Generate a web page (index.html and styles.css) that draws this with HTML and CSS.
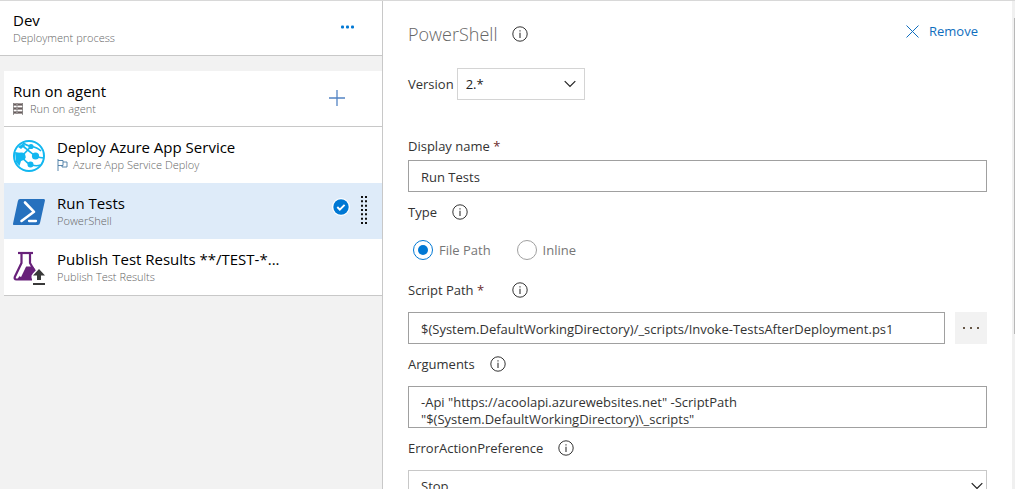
FILE: index.html
```html
<!DOCTYPE html>
<html lang="en">
<head>
<meta charset="utf-8">
<meta name="viewport" content="width=device-width, initial-scale=1">
<title>Dev - Deployment process</title>
<link rel="stylesheet" href="styles.css">
</head>
<body>
<svg class="symbols" aria-hidden="true">
  <symbol id="info" viewBox="0 0 16 16">
    <circle cx="8" cy="8" r="7.2" fill="none" stroke="currentColor"/>
    <path d="M8 6.8V12M8 4.2v1.4" fill="none" stroke="currentColor" stroke-width="1.1"/>
  </symbol>
  <symbol id="chevron" viewBox="0 0 12 8">
    <path d="M.7 1.2 6 6.5l5.300-5.300" fill="none" stroke="currentColor" stroke-width="1.200"/>
  </symbol>
</svg>
<div class="app">
  <aside class="process">
    <header class="row stage">
      <div class="text">
        <h1 class="title">Dev</h1>
        <p class="sub">Deployment process</p>
      </div>
      <button class="icon-button more" type="button" aria-label="More actions">
        <svg width="14" height="4" viewBox="0 0 14 4" fill="currentColor"><rect x="0" y=".5" width="3" height="3" rx="1"/><rect x="5" y=".5" width="3" height="3" rx="1"/><rect x="10" y=".5" width="3" height="3" rx="1"/></svg>
      </button>
    </header>
    <section class="tasks">
      <div class="row agent">
        <div class="text">
          <h2 class="title">Run on agent</h2>
          <p class="sub spaced">
            <svg width="10" height="12" viewBox="0 0 10 12"><path d="M0 0h10v3H0zM0 4h10v3H0zM0 8h10v3H0z" fill="#a59c9c"/><path d="M1 1.500h2M5 1.500h4M1 5.500h2M5 5.500h4M1 9.500h2M5 9.500h4" stroke="#655c5c"/><path d="M.5 0v12M9.500 0v12M4 0v11" stroke="#777" stroke-width=".7"/></svg>
            Run on agent
          </p>
        </div>
        <button class="icon-button add" type="button" aria-label="Add a task">
          <svg width="16" height="16" viewBox="0 0 16 16"><path d="M0 8h16M8 0v16" stroke="currentColor" stroke-width="1.300"/></svg>
        </button>
      </div>
      <ul class="list">
        <li class="row task">
          <svg class="logo" width="32" height="32" viewBox="0 0 32 32" fill="none" stroke="#12b7f0">
            <circle cx="16" cy="16" r="15" stroke-width="2"/>
            <path d="M10 3C13 5 15 6 18 6.500M18 6.500 8.500 16.500M18 6.500C22 7 26 9 28 11M10 6C17 12 19 14 22.500 16M8.500 16.500C12 21 14 23.500 18.500 25M22.500 16C26 17.500 28 18 31 18M18.500 25C22 26 25 26 27.500 25" stroke-width="1.700"/>
            <path d="M2 12 5 12.500 11.500 13.500 12.500 18 8 21 6.500 26 3 22ZM5 7 10 3.500 12 5.500 8 9Z" fill="#12b7f0" stroke="none"/>
            <g fill="#12b7f0" stroke="none"><circle cx="8.500" cy="16.500" r="4"/><circle cx="18" cy="6.500" r="2.600"/><circle cx="22.500" cy="16" r="3.600"/><circle cx="17.500" cy="24.500" r="3"/></g>
          </svg>
          <div class="text">
            <h3 class="title">Deploy Azure App Service</h3>
            <p class="sub tight">
              <svg width="11" height="12" viewBox="0 0 11 12" fill="none" stroke="#487aa4" stroke-width=".9"><path d="M1 0v12M1 1.500h5v5H1M6 3h4v5H5V6.500"/></svg>
              Azure App Service Deploy
            </p>
          </div>
        </li>
        <li class="row task selected">
          <svg class="logo" width="32" height="32" viewBox="0 0 32 32">
            <path d="M7 3h23.500q1.800 0 1.400 1.700L27 27q-.4 2-2.200 2H1.300q-1.700 0-1.200-1.800L4.900 5Q5.300 3 7 3Z" fill="#2671be"/>
            <path d="m12 6.500 9 9.300L8.500 25" fill="none" stroke="#fff" stroke-width="2.600" stroke-linecap="round" stroke-linejoin="round"/><path d="M16 25h7" stroke="#fff" stroke-width="2.300" stroke-linecap="round"/>
          </svg>
          <div class="text">
            <h3 class="title">Run Tests</h3>
            <p class="sub">PowerShell</p>
          </div>
          <svg class="check" width="18" height="18" viewBox="0 0 18 18"><circle cx="9" cy="9" r="9" fill="#fff"/><circle cx="9" cy="9" r="7.700" fill="#0078d4"/><path d="m5.300 9 2.500 2.600 4.800-4.800" fill="none" stroke="#fff" stroke-width="1.900"/></svg>
          <svg class="grip" width="8" height="28" viewBox="0 0 8 28"><path d="M2 0v28M6 0v28" stroke="#111" stroke-width="2" stroke-dasharray="2 2.330"/></svg>
        </li>
        <li class="row task">
          <svg class="logo" width="32" height="34" viewBox="0 0 32 34">
            <path d="M5 2h15" stroke="#68217a" stroke-width="2.200"/><path d="M8.500 2v10L2 25.500Q.8 28.500 3.500 28.500H19M17 2v10l4 7" fill="none" stroke="#68217a" stroke-width="2.200"/>
            <path d="M12 15.500h8l3 4-4.500 5V29H4Z" fill="#68217a"/><path d="M7 25.500 12.500 14" stroke="#fff" stroke-width="2.400"/>
            <path d="m26 16 7 7.500h-4.800V30h-4.400v-6.500H19Z" fill="#fff"/><path d="m26 18 6 6.500h-4V29h-4v-4.500h-4Z" fill="#393939"/><path d="M20 33h12" stroke="#393939" stroke-width="2"/>
          </svg>
          <div class="text">
            <h3 class="title">Publish Test Results **/TEST-*...</h3>
            <p class="sub">Publish Test Results</p>
          </div>
        </li>
      </ul>
    </section>
  </aside>

  <main class="detail">
    <header class="heading">
      <h2 class="name">PowerShell</h2>
      <button class="info" type="button" aria-label="About this task"><svg><use href="#info"/></svg></button>
      <button class="remove" type="button">
        <svg width="13" height="13" viewBox="0 0 13 13"><path d="m.5.5 12 12M12.500.5l-12 12" stroke="currentColor" stroke-width="1"/></svg>
        Remove
      </button>
    </header>
    <div class="version">
      <label for="version">Version</label>
      <div class="drop">
        <select id="version"><option>2.*</option><option>1.*</option></select>
        <svg class="chevron"><use href="#chevron"/></svg>
      </div>
    </div>

    <form class="form">
      <div class="field compact">
        <div class="caption"><label for="display-name">Display name <span class="required">*</span></label></div>
        <input class="box" id="display-name" type="text" value="Run Tests">
      </div>
      <div class="field type" role="radiogroup" aria-labelledby="type-label">
        <div class="caption"><span id="type-label">Type</span><button class="info" type="button" aria-label="About type"><svg><use href="#info"/></svg></button></div>
        <div class="radios">
          <label class="choice"><input type="radio" name="type" checked>File Path</label>
          <label class="choice"><input type="radio" name="type">Inline</label>
        </div>
      </div>
      <div class="field">
        <div class="caption wide"><label for="script-path">Script Path <span class="required">*</span></label><button class="info" type="button" aria-label="About script path"><svg><use href="#info"/></svg></button></div>
        <div class="browse">
          <input class="box" id="script-path" type="text" value="$(System.DefaultWorkingDirectory)/_scripts/Invoke-TestsAfterDeployment.ps1">
          <button class="browse-button" type="button" aria-label="Browse"><svg width="16" height="2" viewBox="0 0 16 2" fill="#665747"><path d="M0 0h2v2H0zM7 0h2v2H7zM14 0h2v2h-2z"/></svg></button>
        </div>
      </div>
      <div class="field">
        <div class="caption"><label for="arguments">Arguments</label><button class="info" type="button" aria-label="About arguments"><svg><use href="#info"/></svg></button></div>
        <textarea class="box" id="arguments" rows="2">-Api "https://acoolapi.azurewebsites.net" -ScriptPath "$(System.DefaultWorkingDirectory)\_scripts"</textarea>
      </div>
      <div class="field">
        <div class="caption"><label for="preference">ErrorActionPreference</label><button class="info" type="button" aria-label="About error action preference"><svg><use href="#info"/></svg></button></div>
        <div class="drop full">
          <select id="preference"><option>Stop</option><option>Continue</option></select>
          <svg class="chevron"><use href="#chevron"/></svg>
        </div>
      </div>
    </form>
  </main>
  <div class="track"><div class="thumb"></div></div>
</div>
</body>
</html>
```
FILE: styles.css
```css
* { box-sizing: border-box; }

body {
  margin: 0;
  background: #fff;
  color: #333;
  font: 13px/20px "Open Sans", "Noto Sans", sans-serif;
}

h1, h2, h3, p, ul { margin: 0; padding: 0; font-weight: 400; }
button, input, select, textarea { font: inherit; color: inherit; margin: 0; }
button { padding: 0; border: 0; background: none; cursor: pointer; }
svg { display: block; flex: none; }
.symbols { position: absolute; width: 0; height: 0; }

.app {
  display: flex;
  height: 100vh;
  overflow: hidden;
  border-top: 1px solid #d8d8d8;
}

.process {
  flex: 0 0 383px;
  background: #f2f2f2;
  border-right: 1px solid #c8c8c8;
}
.row { display: flex; align-items: center; background: #fff; }
.text { flex: 1; min-width: 0; }
.title {
  color: #000;
  font-size: 15px;
  line-height: 20px;
  white-space: nowrap;
}
.sub {
  display: flex;
  align-items: center;
  color: #666;
  font-size: 11px;
  font-weight: 300;
  line-height: 16px;
}
.spaced { gap: 7px; }
.tight { gap: 5px; }

.stage {
  height: 55px;
  padding: 0 27px 0 13px;
  border-bottom: 1px solid #c8c8c8;
}
.icon-button { display: grid; place-items: center; padding-bottom: 2px; }
.more { color: #0078d4; }
.add { color: #5384c4; }

.tasks { margin: 15px 0 0 4px; border-bottom: 1px solid #c8c8c8; }
.agent {
  height: 56px;
  padding: 0 37px 0 9px;
  border-bottom: 1px solid #c8c8c8;
}
.list { list-style: none; }
.task { height: 56px; padding: 0 14px 0 9px; }
.selected { background: #deebf9; }
.logo { margin: 2px 12px 0 0; }
.check { margin: 0 10px 8px 0; }
.grip { margin-bottom: 2px; }

.detail { flex: 1; min-width: 0; padding: 20px 25px 0; }
.heading { display: flex; align-items: center; height: 26px; }
.name { color: #666; font-size: 18px; line-height: 26px; font-weight: 300; }
.info { display: block; margin-left: 15px; }
.info svg { width: 16px; height: 16px; }
.remove {
  display: flex;
  align-items: center;
  gap: 10px;
  margin: 0 9px 6px auto;
  color: #106ebe;
}

.version { display: flex; align-items: center; gap: 3px; margin-top: 21px; }
.drop { position: relative; width: 128px; color: #222; }
.drop.full { width: auto; }
.drop select {
  display: block;
  width: 100%;
  height: 32px;
  padding: 0 30px 0 8px;
  border: 1px solid #d4d4d4;
  border-radius: 0;
  background: #fff;
  appearance: none;
}
.drop.full select { padding-left: 12px; border-color: #c8c8c8; color: #333; }
.chevron {
  position: absolute;
  top: 12px;
  right: 9px;
  width: 12px;
  height: 8px;
  pointer-events: none;
}
.full .chevron { right: 4px; }

.form { padding-top: 36px; }
.field { margin-bottom: 10px; }
.caption { display: flex; align-items: center; height: 20px; margin-bottom: 12px; }
.compact .caption { margin-bottom: 4px; }
.caption.wide .info { margin-left: 28px; }
.required { color: #6b2b2b; }
.box {
  display: block;
  width: 100%;
  height: 32px;
  padding: 2px 12px 0;
  border: 1px solid #a0a0a0;
  border-radius: 0;
  background: #fff;
}
textarea.box {
  height: 42px;
  padding: 7px 12px 0;
  line-height: 17px;
  resize: none;
  overflow: hidden;
}

.type { margin-bottom: 20px; }
.type .caption { margin-bottom: 18px; }
.radios { display: flex; gap: 26px; padding-left: 5px; }
.choice { display: flex; align-items: center; gap: 6px; color: #767676; }
.choice input {
  display: grid;
  place-items: center;
  width: 20px;
  height: 20px;
  border: 1px solid #a0a0a0;
  border-radius: 50%;
  appearance: none;
}
.choice input:checked { border-color: #0078d4; }
.choice input:checked::before {
  content: "";
  width: 10px;
  height: 10px;
  border-radius: 50%;
  background: #0078d4;
}

.browse { display: flex; gap: 10px; }
.browse .box { flex: 1; min-width: 0; }
.browse-button {
  display: grid;
  place-items: center;
  width: 32px;
  height: 32px;
  background: #f2f2f2;
}

.track { flex: 0 0 3px; padding: 17px 0 0 2px; background: #f0f0f0; }
.thumb { height: 67%; background: #b8b8b8; }
```
